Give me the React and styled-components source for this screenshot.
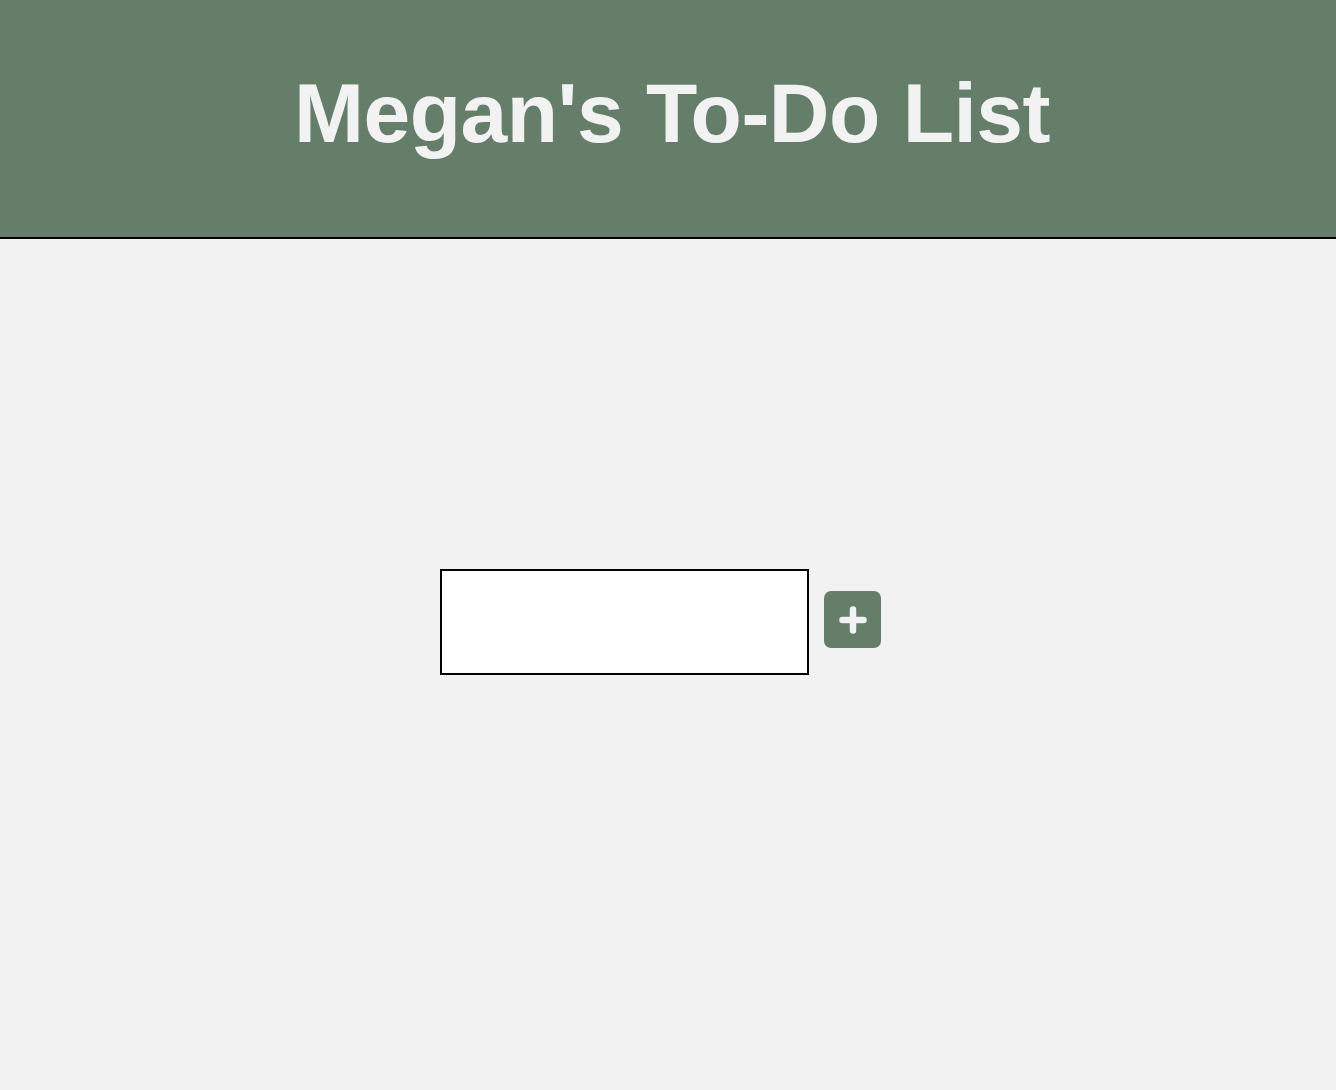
import styled, { createGlobalStyle } from "styled-components";

const GlobalStyle = createGlobalStyle`
  html, body {
    margin: 0;
    padding: 0;
    background-color: #f2f2f2;
    font-family: "Liberation Sans", Arial, sans-serif;
  }
`;

const App = () => {
  return (
    <>
      <GlobalStyle />
      <Header>
        <Title>Megan's To-Do List</Title>
      </Header>
      <Main>
        <Form onSubmit={(e) => e.preventDefault()}>
          <TaskInput type="text" aria-label="New task" />
          <AddButton type="submit" aria-label="Add task">
            <svg width="30" height="30" viewBox="0 0 30 30" fill="none">
              <path
                d="M15 4.5v21M4.5 15h21"
                stroke="#f2f2f2"
                strokeWidth="6.5"
                strokeLinecap="round"
              />
            </svg>
          </AddButton>
        </Form>
      </Main>
    </>
  );
};

export default App;

const Header = styled.header`
  height: 239px;
  box-sizing: border-box;
  background-color: #657e69;
  border-bottom: 2px solid #000;
  display: flex;
  justify-content: center;
  align-items: center;
  padding: 0 0 12px 8px;
`;

const Title = styled.h1`
  margin: 0;
  color: #f2f2f2;
  font-family: "Liberation Sans", Arial, sans-serif;
  font-weight: bold;
  font-size: 84px;
  letter-spacing: -0.5px;
  line-height: 1;
`;

const Main = styled.main`
  min-height: 851px;
  box-sizing: border-box;
  padding-top: 330px;
  padding-right: 15px;
  display: flex;
  justify-content: center;
  align-items: flex-start;
`;

const Form = styled.form`
  display: flex;
  align-items: center;
  gap: 15px;
`;

const TaskInput = styled.input`
  width: 369px;
  height: 106px;
  box-sizing: border-box;
  border: 2px solid #000;
  background: #fff;
  outline: none;
  font-size: 20px;
  padding: 0 12px;
`;

const AddButton = styled.button`
  width: 57px;
  height: 57px;
  margin-bottom: 5px;
  border: none;
  border-radius: 7px;
  background-color: #657e69;
  display: flex;
  align-items: center;
  justify-content: center;
  padding: 0;
  cursor: pointer;
`;
